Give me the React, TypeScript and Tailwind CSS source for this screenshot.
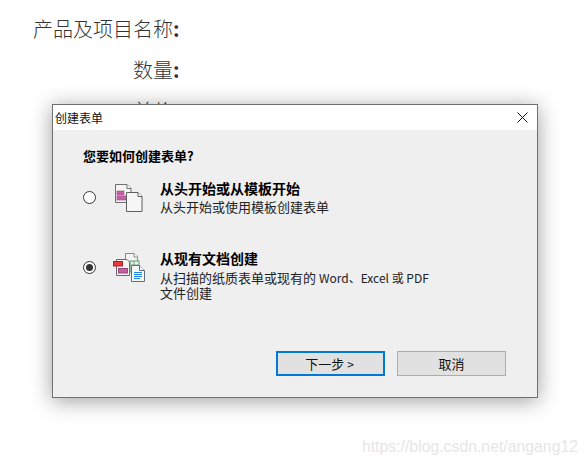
const cjk = "font-['Noto_Sans_CJK_SC','Liberation_Sans',sans-serif]";

function IconBlank() {
  return (
    <svg width="28" height="28" viewBox="0 0 28 28" className="block">
      <path d="M0.500 0.500H12L16 4.500V18.500H0.500Z" fill="#f4f4f4" stroke="#6f6f6f" />
      <path d="M12 0.500V4.500H16" fill="#fff" stroke="#6f6f6f" />
      <rect x="2" y="7" width="7" height="4" fill="#c75fa6" stroke="#98467f" strokeWidth="0.6" />
      <rect x="2" y="12" width="10" height="4" fill="#c75fa6" stroke="#98467f" strokeWidth="0.6" />
      <path d="M11.500 8.500H23L27 12.500V27.500H11.500Z" fill="#f6f6f6" stroke="#5f5f5f" />
      <path d="M23 8.500V12.500H27" fill="#fff" stroke="#5f5f5f" />
    </svg>
  );
}

function IconExisting() {
  return (
    <svg width="34" height="30" viewBox="0 0 34 30" className="block">
      <path d="M12.500 0.500H21L24.500 4V18H12.500Z" fill="#f4f4f4" stroke="#8a8a8a" />
      <path d="M21 0.500V4H24.500" fill="#fff" stroke="#8a8a8a" />
      <rect x="17" y="8" width="9" height="11" fill="#e6f0e6" stroke="#5d9b76" />
      <path d="M17 12H26M17 15.500H26M21 8V19" stroke="#5d9b76" strokeWidth="0.8" />
      <path d="M3.500 6.500H14L16.500 9V22.500H3.500Z" fill="#f6f6f6" stroke="#6a6a6a" />
      <rect x="0.500" y="8.500" width="9" height="4.500" fill="#e8383b" stroke="#a52527" />
      <rect x="5.500" y="15.500" width="9" height="4.500" fill="#c75fa6" stroke="#98467f" />
      <path d="M18.500 12.500H26.500L31.500 17.500V28.500H18.500Z" fill="#f7f7f7" stroke="#5f6f7f" />
      <path d="M26.500 12.500V17.500H31.500" fill="#fff" stroke="#5f6f7f" />
      <path d="M21 19.500H29M21 21.500H29M21 23.500H29M21 25.500H27" stroke="#1e88e5" />
    </svg>
  );
}

function Radio({ checked }: { checked?: boolean }) {
  return (
    <span className="w-[13px] h-[13px] rounded-full border border-[#333333] bg-white flex items-center justify-center shrink-0">
      {checked && <span className="w-[7px] h-[7px] rounded-full bg-[#333333]" />}
    </span>
  );
}

export default function App() {
  return (
    <div className={`relative w-[588px] h-[466px] overflow-hidden bg-white ${cjk}`}>
      <div className="pl-[33px] pt-[15px] text-[20px] leading-[27px] text-[#333333] font-light">
        <p className="mb-[14px]">产品及项目名称<span className="font-bold">:</span></p>
        <p className="pl-[100px] mb-[14px]">数量<span className="font-bold">:</span></p>
        <p className="pl-[100px]">单价<span className="font-bold">:</span></p>
      </div>

      <div className="absolute left-[52px] top-[104px] w-[486px] h-[294px] flex flex-col bg-[#efefef] border border-[#707070] shadow-[0_3px_20px_rgba(0,0,0,0.38)]">
        <div className="h-[25px] shrink-0 bg-white flex items-center justify-between pl-[2px] pr-[9px]">
          <span className="text-[12px] text-[#111111]">创建表单</span>
          <svg width="11" height="11" viewBox="0 0 11 11" className="block">
            <path d="M0.500 0.500L10.500 10.500M10.500 0.500L0.500 10.500" stroke="#111111" strokeWidth="1" />
          </svg>
        </div>

        <div className="flex-1 flex flex-col pl-[30px] pr-[31px] pt-[18px]">
          <h2 className="text-[13px] leading-[16px] font-bold text-black">您要如何创建表单?</h2>

          <div className="flex items-start mt-[16px]">
            <div className="h-[28px] flex items-center mt-[3px]"><Radio /></div>
            <div className="w-[32px] ml-[19px] mt-[4px]"><IconBlank /></div>
            <div className="ml-[13px] text-[13px] leading-[16px] text-[#222222]">
              <div className="font-bold text-[14px] text-black">从头开始或从模板开始</div>
              <div className="mt-[3px]">从头开始或使用模板创建表单</div>
            </div>
          </div>

          <div className="flex items-start mt-[38px]">
            <div className="h-[28px] flex items-center"><Radio checked /></div>
            <div className="w-[34px] ml-[17px]"><IconExisting /></div>
            <div className="ml-[13px] text-[13px] leading-[15px] text-[#222222] mt-[-3px]">
              <div className="font-bold text-[14px] leading-[16px] text-black mb-[4px]">从现有文档创建</div>
              <div>从扫描的纸质表单或现有的 <span className="text-[12px]">Word、Excel 或 PDF</span></div>
              <div>文件创建</div>
            </div>
          </div>

          <div className="mt-auto mb-[21px] flex justify-end gap-[12px]">
            <button className="w-[109px] h-[25px] bg-[#e1e1e1] border-2 border-[#0078d7] text-[13px] text-[#111111] pr-[2px]">下一步 <span className="text-[12px]">&gt;</span></button>
            <button className="w-[109px] h-[25px] bg-[#e1e1e1] border border-[#adadad] text-[13px] text-[#111111]">取消</button>
          </div>
        </div>
      </div>

      <div className="absolute right-[10px] top-[437px] font-['Liberation_Sans',sans-serif] text-[15.800px] leading-[20px] text-[#e6e6e6]">https://blog.csdn.net/angang12</div>
    </div>
  );
}
